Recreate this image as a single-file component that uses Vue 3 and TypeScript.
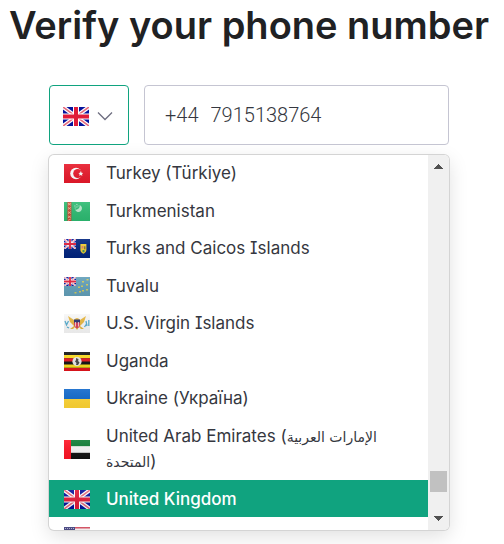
<script setup lang="ts">
import { ref } from 'vue'

interface Country {
  code: string
  name?: string
  native?: string
}

const countries: Country[] = [
  { code: 'tr', name: 'Turkey (Türkiye)' },
  { code: 'tm', name: 'Turkmenistan' },
  { code: 'tc', name: 'Turks and Caicos Islands' },
  { code: 'tv', name: 'Tuvalu' },
  { code: 'vi', name: 'U.S. Virgin Islands' },
  { code: 'ug', name: 'Uganda' },
  { code: 'ua', name: 'Ukraine (Україна)' },
  { code: 'ae', name: 'United Arab Emirates', native: 'الإمارات العربية المتحدة' },
  { code: 'gb', name: 'United Kingdom' },
  { code: 'us' },
]

const selected = ref('gb')
const dialCode = '+44'
const phone = ref('7915138764')
</script>

<template>
  <svg class="sprite" aria-hidden="true">
    <defs>
      <linearGradient id="shade" x1="0" y1="0" x2="0" y2="1">
        <stop offset="0" stop-color="#fff" stop-opacity="0.1" />
        <stop offset="1" stop-color="#000" stop-opacity="0.06" />
      </linearGradient>
      <symbol id="jack" viewBox="0 0 26 19" preserveAspectRatio="none">
        <rect width="26" height="19" fill="#05129c" />
        <path d="M0 0L26 19M26 0L0 19" stroke="#fff" stroke-width="4" />
        <path d="M0 0L26 19M26 0L0 19" stroke="#e66a7c" stroke-width="1.6" />
        <path d="M13 0V19M0 9.5H26" stroke="#fff" stroke-width="6" />
        <path d="M13 0V19M0 9.5H26" stroke="#e01b38" stroke-width="4" />
      </symbol>
      <symbol id="flag-gb" viewBox="0 0 26 19"><use href="#jack" width="26" height="19" /></symbol>
      <symbol id="flag-tr" viewBox="0 0 26 19">
        <rect width="26" height="19" fill="#e81a2b" />
        <circle cx="12" cy="9.5" r="5.8" fill="#fff" />
        <circle cx="13.7" cy="9.5" r="4.5" fill="#e81a2b" />
        <path d="M16.8 7.1l.7 1.6 1.8.2-1.3 1.1.4 1.8-1.6-.9-1.6.9.4-1.8-1.3-1.1 1.8-.2z" fill="#fff" />
      </symbol>
      <symbol id="flag-tm" viewBox="0 0 26 19">
        <rect width="26" height="19" fill="#2dbb72" />
        <rect x="3.4" width="4" height="19" fill="#c64a35" />
        <path d="M4 3.2L6.8 1.2M4 1.2l2.8 2M4 7.4l2.8-2M4 5.4l2.8 2M4 11.6l2.8-2M4 9.6l2.8 2M4 15.8l2.8-2M4 13.8l2.8 2M4 18.4l2.8-1.4" stroke="#edb796" stroke-width=".9" />
        <path d="M15.6 3a3.6 3.6 0 1 1-4.6 4.6 3.8 3.8 0 0 0 4.600-4.600z" fill="#b9e8cd" />
        <path d="M10.2 4h1.4M12.2 2.6h1.3M12.2 5h1.3M10.6 6h1.2M13.6 4h1" stroke="#a5dfbf" />
      </symbol>
      <symbol id="flag-tc" viewBox="0 0 26 19">
        <rect width="26" height="19" fill="#00247f" />
        <use href="#jack" width="12" height="10" />
        <path d="M16.4 5h6v5.5q0 3-3 4.3-3-1.300-3-4.300z" fill="#f4ce32" />
        <path d="M17.6 7h1.800v2.400h-1.800z" fill="#e37d72" />
        <path d="M20 7.200h1.500v3H20z" fill="#8a7a2e" />
        <path d="M18.500 11h2v2.200h-2z" fill="#43945b" />
      </symbol>
      <symbol id="flag-tv" viewBox="0 0 26 19">
        <rect width="26" height="19" fill="#629fb9" />
        <use href="#jack" width="12" height="9" />
        <g fill="#d3cb5c">
          <rect x="22.500" y="2" width="2" height="1.500" /><rect x="18" y="4" width="2" height="1.500" />
          <rect x="22" y="7" width="2" height="1.500" /><rect x="17" y="8.500" width="2" height="1.500" />
          <rect x="22" y="12" width="2" height="1.500" /><rect x="18" y="13" width="2" height="1.500" />
          <rect x="14" y="9.500" width="2" height="1.500" /><rect x="15" y="14" width="2" height="1.500" />
          <rect x="10.500" y="15" width="2" height="1.500" />
        </g>
      </symbol>
      <symbol id="flag-vi" viewBox="0 0 26 19">
        <rect width="26" height="19" fill="#f7f7f7" />
        <path d="M4 2l6 4q3-4 6 0l6-4-2 6-4 4 4 3h-3l-2-2-2 3-2-3-2 2H6l4-3-4-4z" fill="#e8b63e" />
        <path d="M10 6h6v4q0 3-3 4.500Q10 13 10 10z" fill="#d8405a" />
        <path d="M10 5.500h6v3h-6z" fill="#27336f" />
        <path d="M11.500 8v4.500M14.500 8v4.500" stroke="#fff" stroke-width=".7" />
        <path d="M1 7l1.500 4L4.500 7M3 13l2 1M22 7l1 5M24.800 6v6M20.500 13l2-3" stroke="#56add0" stroke-width="1.300" fill="none" />
      </symbol>
      <symbol id="flag-ug" viewBox="0 0 26 19">
        <rect width="26" height="19" fill="#111" />
        <path d="M0 4.600H26M0 14.200H26" stroke="#fcdc1c" stroke-width="3.200" />
        <path d="M0 7.800H26M0 17.500H26" stroke="#e3141c" stroke-width="3.200" />
        <circle cx="13" cy="9.500" r="4.600" fill="#e9e9e9" />
        <path d="M12 6l2.500 1-.4 2 1.400 1.500-1.500 2.500h-2l.5-2-1.500-1.500 1-1.500z" fill="#444" />
      </symbol>
      <symbol id="flag-ua" viewBox="0 0 26 19">
        <rect width="26" height="10" fill="#1068cb" />
        <rect y="10" width="26" height="9" fill="#ffd534" />
      </symbol>
      <symbol id="flag-ae" viewBox="0 0 26 19">
        <rect width="26" height="6.400" fill="#0d7b33" />
        <rect y="6.400" width="26" height="6.400" fill="#f7f7f7" />
        <rect y="12.800" width="26" height="6.200" fill="#111" />
        <rect width="7" height="19" fill="#ff1425" />
      </symbol>
      <symbol id="flag-us" viewBox="0 0 26 19">
        <rect width="26" height="19" fill="#f5eeee" />
        <path d="M0 .750H26M0 3.700H26M0 6.600H26M0 9.500H26M0 12.400H26M0 15.300H26M0 18.200H26" stroke="#cf4356" stroke-width="1.500" />
        <rect width="11" height="10" fill="#3c3b78" />
        <path d="M1 1.500h9M1 4h9M1 6.500h9" stroke="#a9a8cc" stroke-dasharray="1 1" />
      </symbol>
    </defs>
  </svg>

  <main class="page">
    <h1 class="title">Verify your phone number</h1>

    <form class="form" @submit.prevent>
      <div class="fields">
        <button class="picker" type="button" aria-label="Country" aria-haspopup="listbox" aria-expanded="true">
          <svg class="flag" viewBox="0 0 26 19"><use :href="'#flag-' + selected" /></svg>
          <svg class="chevron" viewBox="0 0 16 10"><path d="M1 1.500L8 8.500L15 1.500" /></svg>
        </button>
        <label class="phone">
          <span class="dial">{{ dialCode }}</span>
          <input v-model="phone" class="number" type="tel" aria-label="Phone number" />
        </label>
      </div>

      <div class="menu">
        <ul class="list" role="listbox" aria-label="Country">
          <li
            v-for="c in countries"
            :key="c.code"
            class="option"
            :class="{ active: c.code === selected }"
            role="option"
            :aria-selected="c.code === selected"
            @click="selected = c.code"
          >
            <svg class="flag" viewBox="0 0 26 19">
              <use :href="'#flag-' + c.code" />
              <rect width="26" height="19" fill="url(#shade)" />
            </svg>
            <span v-if="c.name">{{ c.name }}<template v-if="c.native"> (<bdi class="native" lang="ar">{{ c.native }}</bdi>)</template></span>
          </li>
        </ul>
        <div class="scrollbar" aria-hidden="true">
          <svg class="arrow" viewBox="0 0 9 5"><path d="M4 0h1v1h1v1h1v1h1v1h1v1H0V4h1V3h1V2h1V1h1z" /></svg>
          <div class="thumb"></div>
          <svg class="arrow" viewBox="0 0 9 5"><path d="M0 0h9v1H8v1H7v1H6v1H5v1H4V4H3V3H2V2H1V1H0z" /></svg>
        </div>
      </div>
    </form>
  </main>
</template>

<style>
body {
  background: #fff;
}
</style>

<style scoped>
.sprite {
  position: absolute;
  width: 0;
  height: 0;
}
.page {
  display: flex;
  flex-direction: column;
  align-items: center;
  padding: 0 6px 14px 0;
  font-family: Inter, "DejaVu Sans", sans-serif;
  color: #353740;
}
.title {
  margin: 0;
  padding: 1px 0 36px;
  font-size: 38px;
  line-height: 48px;
  font-weight: 600;
  color: #202123;
  white-space: nowrap;
}
.form {
  width: 100%;
  max-width: 400px;
}
.fields {
  display: flex;
  gap: 15px;
}
.picker,
.phone {
  box-sizing: border-box;
  display: flex;
  align-items: center;
  height: 60px;
  border: 1px solid #c5c5d2;
  border-radius: 4px;
  background: #fff;
}
.picker {
  width: 80px;
  flex: none;
  gap: 8px;
  padding: 2px 13px 0;
  border-color: #10a37f;
}
.flag {
  width: 26px;
  height: 19px;
  flex: none;
}
.chevron {
  width: 16px;
  height: 10px;
  fill: none;
  stroke: #6e6e80;
  stroke-width: 1.3;
}
.phone {
  flex: 1;
  min-width: 0;
  gap: 12px;
  padding: 0 20px;
  font-family: Roboto, sans-serif;
  font-size: 20px;
  font-weight: 300;
}
.number {
  flex: 1;
  min-width: 0;
  padding: 0;
  border: 0;
  outline: 0;
  background: none;
  font: inherit;
  color: inherit;
}
.menu {
  display: flex;
  height: 375px;
  margin-top: 10px;
  overflow: hidden;
  border-radius: 5px;
  background: #fff;
  box-shadow: 0 0 0 1px #d4d4d4, 0 6px 20px rgba(0, 0, 0, 0.13);
}
.list {
  flex: 1;
  min-width: 0;
  margin: -1px 0 0;
  padding: 0;
  list-style: none;
  font-size: 17px;
  line-height: 1.5;
  font-feature-settings: "cv08";
}
.option {
  box-sizing: border-box;
  display: flex;
  align-items: center;
  gap: 16px;
  min-height: 37px;
  padding: 7px 15px 5px;
  cursor: pointer;
}
.option.active {
  background: #10a37f;
  color: #fff;
  font-weight: 500;
}
.native {
  font-family: "DejaVu Sans", sans-serif;
  font-size: 14px;
}
.scrollbar {
  box-sizing: border-box;
  display: flex;
  flex-direction: column;
  align-items: center;
  width: 21px;
  padding: 9px 0;
  background: #f0f0f0;
}
.arrow {
  width: 9px;
  height: 5px;
  fill: #505050;
}
.thumb {
  width: 17px;
  height: 21px;
  margin: auto 0 24px;
  background: #c1c1c1;
}
</style>
